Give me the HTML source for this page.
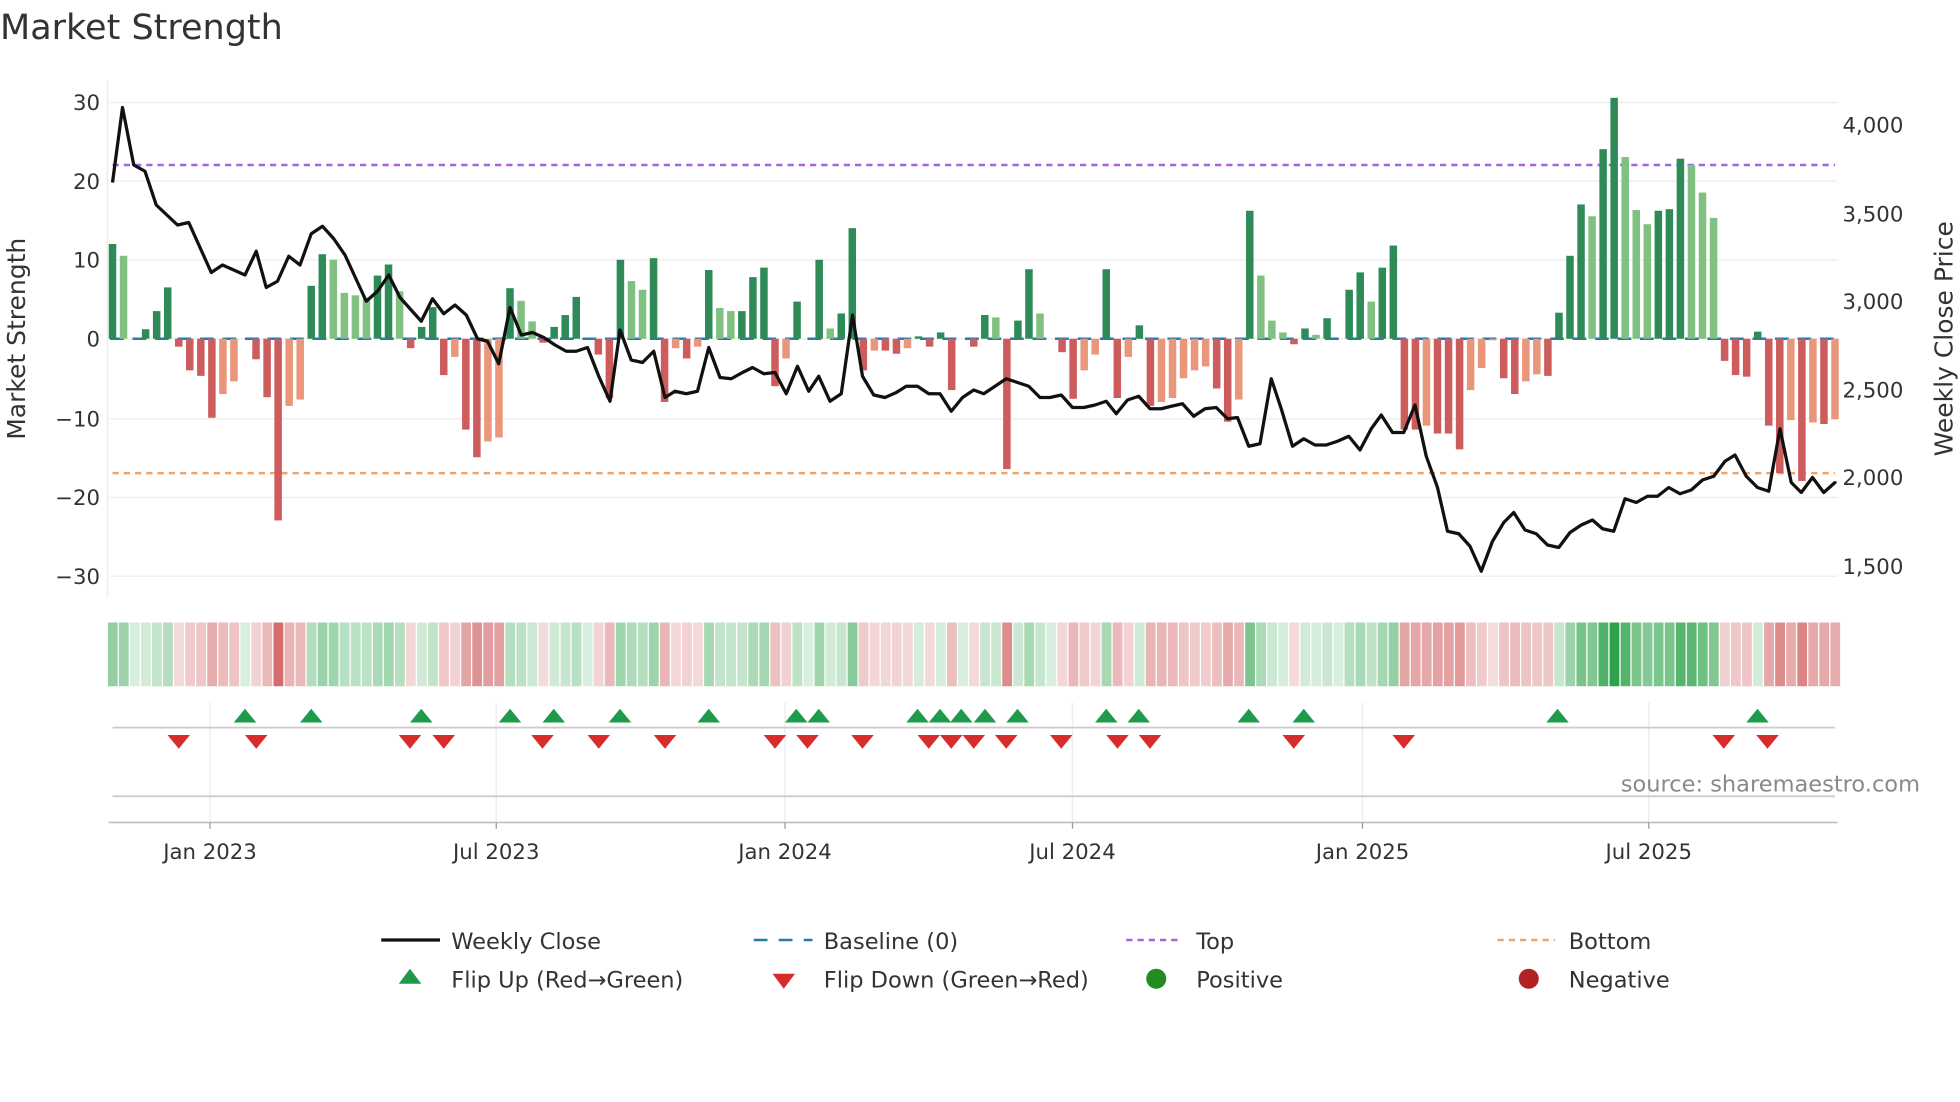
<!DOCTYPE html>
<html><head><meta charset="utf-8"><style>
html,body{margin:0;padding:0;background:#fff;}
svg{display:block;font-family:"DejaVu Sans","Liberation Sans",sans-serif;}
</style></head><body>
<svg id="s" width="1960" height="1102" viewBox="0 0 1568 881.6" xmlns="http://www.w3.org/2000/svg">
<text x="0" y="31" font-size="28" fill="#333">Market Strength</text>
<g id="grid"></g>
<line x1="90" y1="132" x2="1468" y2="132" stroke="#a366e0" stroke-width="2" stroke-dasharray="5 4"/>
<line x1="90" y1="378.5" x2="1468" y2="378.5" stroke="#f0a366" stroke-width="2" stroke-dasharray="5 4"/>
<line x1="88" y1="271" x2="1470" y2="271" stroke="#2a78b0" stroke-width="2" stroke-dasharray="11 7"/>
<g id="bars"></g>
<polyline id="price" fill="none" stroke="#111" stroke-width="2.6" stroke-linejoin="round"/>
<g id="heat"></g>
<g id="marks"></g>
<g id="labels" font-size="17" fill="#333"></g>
<text x="1536" y="633" text-anchor="end" font-size="18" fill="#8a8a8a">source: sharemaestro.com</text>
<text transform="translate(20,271) rotate(-90)" text-anchor="middle" font-size="20" fill="#333">Market Strength</text>
<text transform="translate(1562,271) rotate(-90)" text-anchor="middle" font-size="20" fill="#333">Weekly Close Price</text>
<g font-size="18" fill="#333">
<line x1="305" y1="752" x2="352" y2="752" stroke="#111" stroke-width="2.6"/>
<text x="361" y="759">Weekly Close</text>
<line x1="603" y1="752" x2="650" y2="752" stroke="#2a78b0" stroke-width="2" stroke-dasharray="11 9"/>
<text x="659" y="759">Baseline (0)</text>
<line x1="901" y1="752" x2="946" y2="752" stroke="#a366e0" stroke-width="2" stroke-dasharray="5 4"/>
<text x="957" y="759">Top</text>
<line x1="1198" y1="752" x2="1244" y2="752" stroke="#f0a366" stroke-width="2" stroke-dasharray="5 4"/>
<text x="1255" y="759">Bottom</text>
<polygon points="328,775 319,787 337,787" fill="#1e9a4a"/>
<text x="361" y="790">Flip Up (Red→Green)</text>
<polygon points="618,779 636,779 627,791" fill="#d62c2c"/>
<text x="659" y="790">Flip Down (Green→Red)</text>
<circle cx="925" cy="783" r="8" fill="#228b22"/>
<text x="957" y="790">Positive</text>
<circle cx="1223" cy="783" r="8" fill="#b22222"/>
<text x="1255" y="790">Negative</text>
</g>
</svg>
<script>
var NS="http://www.w3.org/2000/svg";
function el(p,t,a,txt){var e=document.createElementNS(NS,t);for(var k in a)e.setAttribute(k,a[k]);if(txt!==undefined)e.textContent=txt;document.getElementById(p).appendChild(e);return e;}
var Y0=271,SC=6.32;
[82,145,208,271,335,398,461].forEach(function(y){el("grid","line",{x1:88,y1:y,x2:1470,y2:y,stroke:"#efefef","stroke-width":1.2});});
el("grid","line",{x1:86,y1:65,x2:86,y2:478,stroke:"#eee","stroke-width":1.2});
[168,397,628,858,1090,1319].forEach(function(x){el("grid","line",{x1:x,y1:562,x2:x,y2:658,stroke:"#eee","stroke-width":1.2});});
el("grid","line",{x1:90,y1:582,x2:1468,y2:582,stroke:"#ccc","stroke-width":1.5});
el("grid","line",{x1:90,y1:637,x2:1468,y2:637,stroke:"#ccc","stroke-width":1.5});
el("grid","line",{x1:87,y1:658,x2:1470,y2:658,stroke:"#bbb","stroke-width":1.2});
var v=[12,10.5,0,1.2,3.5,6.5,-1,-4,-4.7,-10,-7,-5.4,0,-2.6,-7.4,-23,-8.5,-7.7,6.7,10.7,10,5.8,5.5,5.2,8,9.4,6,-1.2,1.5,4,-4.6,-2.3,-11.5,-15,-13,-12.5,6.4,4.8,2.2,-0.5,1.5,3,5.3,0,-2,-7.5,10,7.3,6.2,10.2,-8,-1.2,-2.5,-1,8.7,3.9,3.5,3.5,7.8,9,-6,-2.5,4.7,0,10,1.3,3.2,14,-4,-1.5,-1.5,-1.9,-1.2,0.3,-1,0.8,-6.5,0,-1,3,2.7,-16.5,2.3,8.8,3.2,0,-1.7,-7.6,-4,-2,8.8,-7.5,-2.3,1.7,-8.5,-8,-7.5,-5,-4,-3.5,-6.3,-10.5,-7.7,16.2,8,2.3,0.8,-0.7,1.3,0.5,2.6,0,6.2,8.4,4.7,9,11.8,-11.5,-11.5,-11,-12,-12,-14,-6.5,-3.7,-0.2,-5,-7,-5.4,-4.5,-4.7,3.3,10.5,17,15.5,24,30.5,23,16.3,14.5,16.2,16.4,22.8,22,18.5,15.3,-2.8,-4.6,-4.8,0.9,-11,-17,-10.3,-18,-10.6,-10.8,-10.2];
var n=v.length,x0=90,dx=(1468-90)/(n-1);
for(var i=0;i<n;i++){var x=x0+i*dx,a=v[i],p=i?v[i-1]:0;
 var grow=Math.abs(a)>=Math.abs(p)||(a*p<0);
 var c=a>=0?(grow?"#2e8b57":"#80c080"):(grow?"#cd5c5c":"#e9967a");
 if(a!==0){var h=Math.abs(a)*SC;el("bars","rect",{x:x-3,y:a>0?Y0-h:Y0,width:6,height:h,fill:c});}
 var op=0.18+0.8*Math.min(Math.abs(a)/30,1);
 el("heat","rect",{x:x-4.2+0.5,y:498,width:dx-1,height:51,fill:a>=0?"rgba(40,160,70,"+op+")":"rgba(200,70,70,"+op+")"});
}
var pts="90,146 98,86 107,132 116,137 125,164 142,180 151,178 169,218 178,212 196,220 205,201 213,230 222,225 231,205 240,212 249,187 258,181 267,191 276,204 293,241 302,233 311,220 320,238 337,257 346,239 355,251 364,244 373,252 382,271 390,273 399,291 408,246 417,268 426,266 435,270 444,276 453,281 461,281 470,278 479,301 488,321 496,264 505,288 514,290 523,281 532,318 540,313 549,315 558,313 567,278 576,302 585,303 594,298 602,294 611,299 620,298 629,315 638,293 647,313 655,301 664,321 673,315 682,252 690,301 699,316 708,318 717,314 725,309 734,309 743,315 752,315 761,329 770,318 779,312 787,315 796,309 805,303 814,306 823,309 832,318 840,318 849,316 858,326 867,326 876,324 885,321 893,331 902,320 911,317 920,327 929,327 937,325 946,323 955,333 964,327 973,326 982,335 990,334 999,357 1008,355 1017,303 1025,327 1034,357 1043,351 1052,356 1061,356 1070,353 1079,349 1088,360 1097,343 1105,332 1114,346 1123,346 1132,324 1141,365 1150,390 1158,425 1167,427 1176,437 1185,457 1194,433 1203,418 1211,410 1220,424 1229,427 1238,436 1247,438 1256,426 1265,420 1274,416 1282,423 1291,425 1300,399 1309,402 1318,397 1326,397 1335,390 1344,395 1353,392 1362,384 1371,381 1380,369 1388,364 1397,381 1406,390 1415,393 1424,343 1433,386 1441,394 1450,382 1459,394 1468,386 1468,385";
document.getElementById("price").setAttribute("points",pts);
[196,249,337,408,443,496,567,637,655,734,752,769,788,814,885,911,999,1043,1246,1406].forEach(function(x){el("marks","polygon",{points:x+",567 "+(x-9)+",578 "+(x+9)+",578",fill:"#1e9a4a"});});
[143,205,328,355,434,479,532,620,646,690,743,761,779,805,849,894,920,1035,1123,1379,1414].forEach(function(x){el("marks","polygon",{points:(x-9)+",588 "+(x+9)+",588 "+x+",599",fill:"#d62c2c"});});
[["30",82],["20",145],["10",208],["0",271],["\u221210",335],["\u221220",398],["\u221230",461]].forEach(function(t){el("labels","text",{x:80,y:t[1]+6,"text-anchor":"end"},t[0]);});
[["4,000",100],["3,500",171],["3,000",241],["2,500",312],["2,000",382],["1,500",453]].forEach(function(t){el("labels","text",{x:1474,y:t[1]+6},t[0]);});
[["Jan 2023",168],["Jul 2023",397],["Jan 2024",628],["Jul 2024",858],["Jan 2025",1090],["Jul 2025",1319]].forEach(function(t){el("labels","line",{x1:t[1],y1:658,x2:t[1],y2:663,stroke:"#999"});el("labels","text",{x:t[1],y:687,"text-anchor":"middle"},t[0]);});
</script>
</body></html>
